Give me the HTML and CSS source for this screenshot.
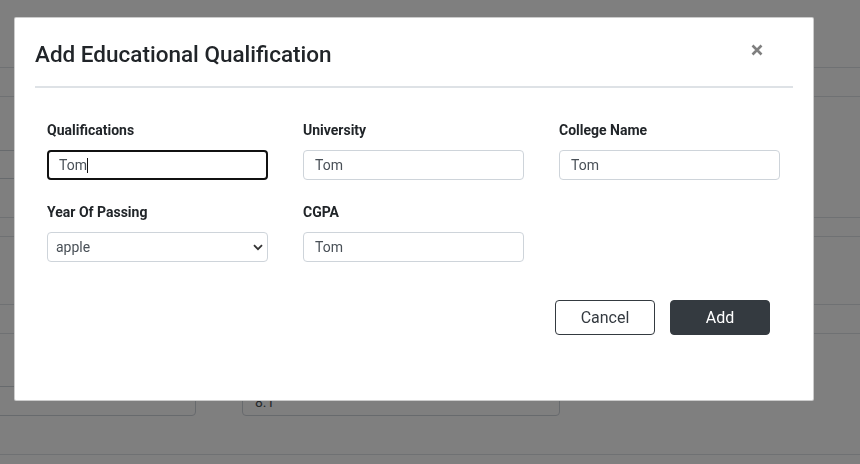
FILE: index.html
```html
<!DOCTYPE html>
<html lang="en">
<head>
<meta charset="utf-8">
<title>Add Educational Qualification</title>
<link rel="stylesheet" href="styles.css">
</head>
<body>
<div class="page">
  <div class="bg-line h67"></div>
  <div class="bg-line h28"></div>
  <div class="bg-fields top-fields">
    <div class="bg-input bg-input-left"></div>
  </div>
  <div class="bg-line h38"></div>
  <div class="bg-line h18"></div>
  <div class="bg-line h67"></div>
  <div class="bg-line h28"></div>
  <div class="bg-fields bottom-fields">
    <div class="bg-input bg-input-left"></div>
    <div class="bg-input bg-input-mid">8.1</div>
  </div>
  <div class="bg-line h38"></div>
</div>

<div class="backdrop"></div>

<div class="modal" role="dialog" aria-labelledby="modal-title">
  <div class="modal-header">
    <h5 class="modal-title" id="modal-title">Add Educational Qualification</h5>
    <button class="close" type="button" aria-label="Close">
      <svg width="12" height="12" viewBox="0 0 12 12" aria-hidden="true">
        <path d="M1.5 1.5 L10.5 10.5 M10.5 1.5 L1.5 10.5" stroke="#7f7f7f" stroke-width="2.6" fill="none"/>
      </svg>
    </button>
  </div>
  <div class="modal-body">
    <div class="form-grid">
      <div class="field">
        <label class="label">Qualifications</label>
        <div class="control-wrap">
          <input class="control focused" type="text" value="Tom">
          <span class="caret"></span>
        </div>
      </div>
      <div class="field">
        <label class="label">University</label>
        <input class="control" type="text" value="Tom">
      </div>
      <div class="field">
        <label class="label">College Name</label>
        <input class="control" type="text" value="Tom">
      </div>
      <div class="field">
        <label class="label">Year Of Passing</label>
        <div class="control-wrap">
          <select class="control select">
            <option>apple</option>
          </select>
          <svg class="chevron" width="10" height="7" viewBox="0 0 10 7" aria-hidden="true">
            <path d="M1 1.2 L5 5.2 L9 1.2" stroke="#333" stroke-width="1.8" fill="none"/>
          </svg>
        </div>
      </div>
      <div class="field">
        <label class="label">CGPA</label>
        <input class="control" type="text" value="Tom">
      </div>
    </div>
    <div class="actions">
      <button class="btn btn-outline" type="button">Cancel</button>
      <button class="btn btn-dark" type="button">Add</button>
    </div>
  </div>
</div>
</body>
</html>
```
FILE: styles.css
```css
* {
  box-sizing: border-box;
}

html, body {
  margin: 0;
  padding: 0;
  width: 860px;
  height: 464px;
  overflow: hidden;
  background: #ffffff;
  font-family: Roboto, "Liberation Sans", Arial, sans-serif;
  color: #212529;
}

/* ---------- background page ---------- */
.page {
  display: flex;
  flex-direction: column;
  width: 860px;
}

.bg-line {
  border-bottom: 1px solid #dee2e6;
  box-sizing: content-box;
}

.h67 { height: 67px; }
.h28 { height: 28px; }
.h38 { height: 38px; }
.h18 { height: 18px; }

.bg-fields {
  display: flex;
  align-items: flex-start;
}

.top-fields {
  margin-top: 53px;
}

.bottom-fields {
  margin-top: 52px;
}

.bg-input {
  border: 1px solid #ced4da;
  border-radius: 4px;
  background: #fff;
  font-size: 14px;
  color: #495057;
}

.top-fields .bg-input {
  height: 29px;
}

.bottom-fields .bg-input {
  height: 30px;
}

.bg-input-left {
  width: 202px;
  margin-left: -6px;
}

.bg-input-mid {
  width: 318px;
  margin-left: 46px;
  padding: 5px 0 0 12px;
  line-height: 21px;
}

.backdrop {
  position: fixed;
  inset: 0;
  background: rgba(0, 0, 0, 0.5);
}

/* ---------- modal ---------- */
.modal {
  position: fixed;
  left: 14px;
  top: 17px;
  width: 800px;
  height: 384px;
  background: #fff;
  border: 1px solid rgba(0, 0, 0, 0.2);
  border-radius: 2px;
  display: flex;
  flex-direction: column;
}

.modal-header {
  display: flex;
  align-items: flex-start;
  margin: 0 20px;
  padding: 23px 0 18px 0;
  border-bottom: 2px solid #dee2e6;
}

.modal-title {
  margin: 0;
  font-size: 22.5px;
  font-weight: 500;
  line-height: 27px;
  color: #212529;
}

.close {
  margin-left: auto;
  margin-right: 30px;
  margin-top: 3px;
  padding: 0;
  border: 0;
  background: transparent;
  width: 12px;
  height: 12px;
  display: block;
  cursor: pointer;
}

.close svg {
  display: block;
}

.modal-body {
  padding: 32px 33px 0 32px;
}

.form-grid {
  display: grid;
  grid-template-columns: repeat(3, 221px);
  column-gap: 35px;
  row-gap: 22px;
}

.field {
  display: flex;
  flex-direction: column;
}

.label {
  font-size: 14px;
  font-weight: 700;
  line-height: 21px;
  margin-bottom: 9px;
  color: #212529;
}

.control-wrap {
  position: relative;
}

.control {
  display: block;
  width: 221px;
  height: 30px;
  border: 1px solid #ced4da;
  border-radius: 4px;
  padding: 0 11px;
  font-family: Roboto, "Liberation Sans", Arial, sans-serif;
  font-size: 14px;
  color: #495057;
  background: #fff;
  outline: none;
}

.control.focused {
  border: 2px solid #111;
  padding: 0 10px;
  border-radius: 4px;
}

.caret {
  position: absolute;
  left: 40px;
  top: 8px;
  width: 1px;
  height: 15px;
  background: #111;
}

.select {
  appearance: none;
  -webkit-appearance: none;
  padding: 0 8px;
}

.chevron {
  position: absolute;
  right: 5px;
  top: 12px;
  pointer-events: none;
}

.actions {
  display: flex;
  justify-content: flex-end;
  gap: 15px;
  margin-top: 38px;
  margin-right: 10px;
}

.btn {
  width: 100px;
  height: 35px;
  border-radius: 4px;
  font-family: Roboto, "Liberation Sans", Arial, sans-serif;
  font-size: 16px;
  font-weight: 400;
  cursor: pointer;
  padding: 0;
}

.btn-outline {
  background: #fff;
  color: #343a40;
  border: 1px solid #343a40;
}

.btn-dark {
  background: #343a40;
  color: #fff;
  border: 1px solid #343a40;
}
```
